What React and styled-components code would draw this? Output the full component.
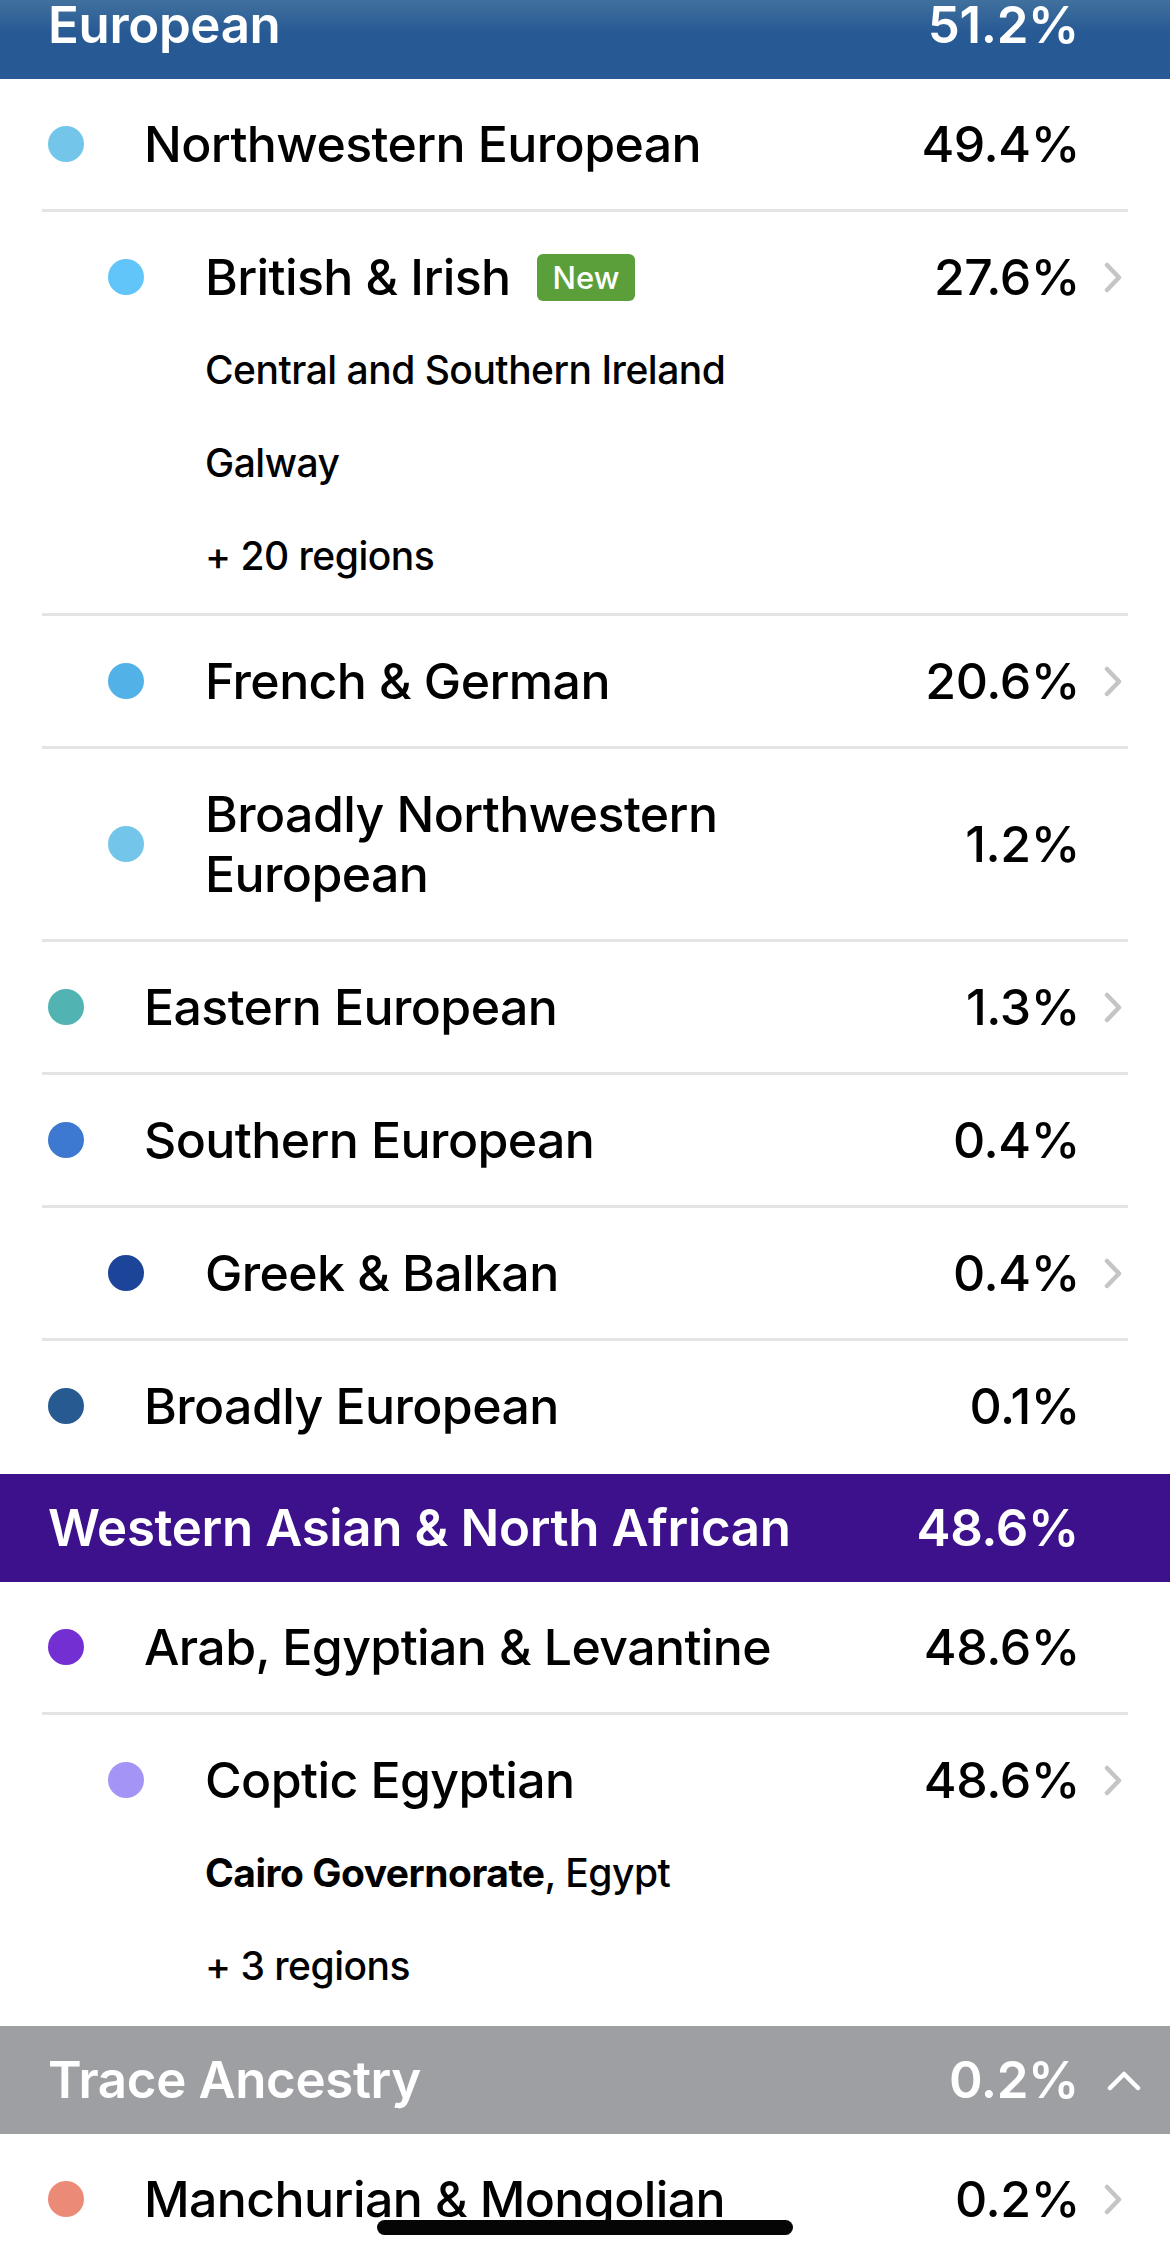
import styled, { createGlobalStyle } from "styled-components";

const GlobalStyle = createGlobalStyle`
    html, body {
        margin: 0;
        padding: 0;
        background: #ffffff;
    }
    body {
        font-family: Inter, "Noto Sans", "Liberation Sans", sans-serif;
        color: #000000;
        -webkit-font-smoothing: antialiased;
    }
`;

const Page = styled.div`
    width: 1170px;
    overflow: hidden;
`;

const SectionHeader = styled.div`
    height: 108px;
    display: flex;
    align-items: center;
    padding: 0 29px 0 48px;
    box-sizing: border-box;
    background: ${(p) => p.$bg};
    color: #ffffff;
    font-size: 51px;
    line-height: 40px;
    font-weight: 600;
    letter-spacing: -0.35px;

    &.clipped {
        margin-top: -29px;
        background: linear-gradient(to bottom, ${(p) => p.$bg} 0, #40709d 29px, ${(p) => p.$bg} 62px);
    }
`;

const HeaderTitle = styled.div`
    flex: 1;
`;

const HeaderPct = styled.div``;

const CaretSlot = styled.div`
    width: 62px;
    display: flex;
    justify-content: flex-end;
    align-items: center;
`;

const Row = styled.div`
    margin: 0 42px;
    padding: 35px 6px ${(p) => (p.$hasSub ? "11px" : "35px")} 0;
    border-bottom: 3px solid ${(p) => (p.$divider ? "#e4e4e6" : "transparent")};
`;

const MainLine = styled.div`
    display: flex;
    align-items: center;
`;

const Dot = styled.span`
    flex: none;
    width: 36px;
    height: 36px;
    border-radius: 50%;
    background: ${(p) => p.$color};
    margin-left: ${(p) => (p.$level === 2 ? "66px" : "6px")};
    margin-right: ${(p) => (p.$level === 2 ? "61px" : "60px")};
`;

const NameWrap = styled.div`
    flex: 1;
    display: flex;
    align-items: center;
`;

const Name = styled.span`
    max-width: 680px;
    font-size: 50px;
    font-weight: 450;
    line-height: 60px;
    letter-spacing: -0.6px;
`;

const Badge = styled.span`
    margin-left: 26px;
    height: 47px;
    padding: 0 16px;
    display: inline-flex;
    align-items: center;
    border-radius: 6px;
    background: #5b9f3a;
    color: #ffffff;
    font-size: 31px;
    font-weight: 500;
`;

const Pct = styled.span`
    font-size: 50px;
    font-weight: 450;
    line-height: 60px;
    letter-spacing: -0.4px;
`;

const ChevronSlot = styled.span`
    width: 42px;
    display: flex;
    justify-content: flex-end;
    align-items: center;
`;

const SubList = styled.div`
    margin-top: 16px;
    padding-left: ${(p) => (p.$level === 2 ? "163px" : "102px")};
`;

const SubLine = styled.div`
    font-size: 39px;
    font-weight: 450;
    line-height: 93px;
    letter-spacing: -0.5px;
`;

const Strong = styled.span`
    font-weight: 700;
`;

const HomeIndicator = styled.div`
    position: fixed;
    left: 377px;
    bottom: 24px;
    width: 416px;
    height: 15px;
    border-radius: 8px;
    background: #050505;
`;

const Chevron = () => (
    <svg width="18" height="31" viewBox="0 0 18 31">
        <path d="M3 3 L15 15.5 L3 28" fill="none" stroke="#c5c5c8" strokeWidth="4.5" strokeLinecap="round" strokeLinejoin="round" />
    </svg>
);

const CaretUp = () => (
    <svg width="34" height="21" viewBox="0 0 34 21">
        <path d="M3 18 L17 4 L31 18" fill="none" stroke="#ffffff" strokeWidth="4.5" strokeLinecap="round" strokeLinejoin="round" />
    </svg>
);

const sections = [
    {
        title: "European",
        pct: "51.2%",
        bg: "#275a94",
        clipped: true,
        rows: [
            { level: 1, name: "Northwestern European", pct: "49.4%", color: "#73c5e9" },
            {
                level: 2,
                name: "British & Irish",
                badge: "New",
                pct: "27.6%",
                color: "#62c5fa",
                chevron: true,
                subs: ["Central and Southern Ireland", "Galway", "+ 20 regions"],
            },
            { level: 2, name: "French & German", pct: "20.6%", color: "#52b1e6", chevron: true },
            { level: 2, name: "Broadly Northwestern European", pct: "1.2%", color: "#73c5e9" },
            { level: 1, name: "Eastern European", pct: "1.3%", color: "#52b3b3", chevron: true },
            { level: 1, name: "Southern European", pct: "0.4%", color: "#3d79d0" },
            { level: 2, name: "Greek & Balkan", pct: "0.4%", color: "#1c4498", chevron: true },
            { level: 1, name: "Broadly European", pct: "0.1%", color: "#265a91" },
        ],
    },
    {
        title: "Western Asian & North African",
        pct: "48.6%",
        bg: "#3e118c",
        rows: [
            { level: 1, name: "Arab, Egyptian & Levantine", pct: "48.6%", color: "#742fd3" },
            {
                level: 2,
                name: "Coptic Egyptian",
                pct: "48.6%",
                color: "#a394f6",
                chevron: true,
                subs: [
                    <>
                        <Strong>Cairo Governorate</Strong>, Egypt
                    </>,
                    "+ 3 regions",
                ],
            },
        ],
    },
    {
        title: "Trace Ancestry",
        pct: "0.2%",
        bg: "#9e9fa2",
        caret: true,
        rows: [{ level: 1, name: "Manchurian & Mongolian", pct: "0.2%", color: "#eb8b77", chevron: true }],
    },
];

const App = () => {
    return (
        <>
            <GlobalStyle />
            <Page>
                {sections.map((section, si) => (
                    <section key={si}>
                        <SectionHeader $bg={section.bg} className={section.clipped ? "clipped" : ""}>
                            <HeaderTitle>{section.title}</HeaderTitle>
                            <HeaderPct>{section.pct}</HeaderPct>
                            <CaretSlot>{section.caret ? <CaretUp /> : null}</CaretSlot>
                        </SectionHeader>
                        {section.rows.map((row, ri) => (
                            <Row key={ri} $hasSub={!!row.subs} $divider={ri < section.rows.length - 1}>
                                <MainLine>
                                    <Dot $color={row.color} $level={row.level} />
                                    <NameWrap>
                                        <Name>{row.name}</Name>
                                        {row.badge ? <Badge>{row.badge}</Badge> : null}
                                    </NameWrap>
                                    <Pct>{row.pct}</Pct>
                                    <ChevronSlot>{row.chevron ? <Chevron /> : null}</ChevronSlot>
                                </MainLine>
                                {row.subs ? (
                                    <SubList $level={row.level}>
                                        {row.subs.map((sub, i) => (
                                            <SubLine key={i}>{sub}</SubLine>
                                        ))}
                                    </SubList>
                                ) : null}
                            </Row>
                        ))}
                    </section>
                ))}
            </Page>
            <HomeIndicator />
        </>
    );
};

export default App;
